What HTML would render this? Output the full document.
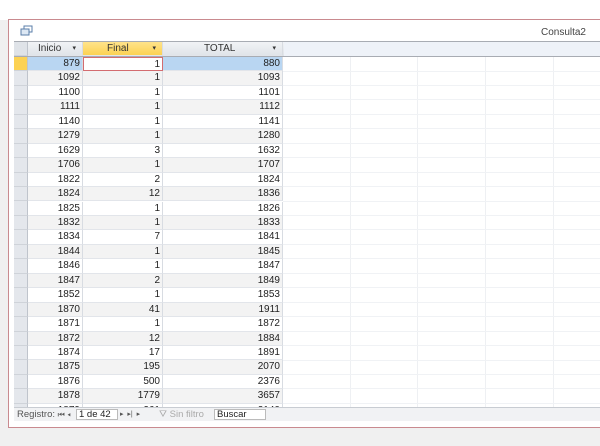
<!DOCTYPE html>
<html><head><meta charset="utf-8"><style>
*{margin:0;padding:0;box-sizing:border-box}
body{width:600px;height:446px;background:#f0f0f0;font-family:"Liberation Sans",sans-serif;font-size:10px;color:#222;position:relative;overflow:hidden}
.topb{position:absolute;left:0;top:0;width:600px;height:20px;background:#fff}
.frame{position:absolute;left:8px;top:19px;width:600px;height:409px;border:1px solid #c98a8f;background:#fff}
.title{position:absolute;right:14px;top:27px;font-size:10px;color:#444}
.grid{position:absolute;left:14px;top:41px;width:590px;height:366px;overflow:hidden;background:#fff;border-top:1px solid #a8acb3}
.selcol{position:absolute;left:0;top:15px;width:14px;bottom:0;background:#e4e7ec;border-right:1px solid #bfc4cc}
.row{position:absolute;left:0;width:600px;height:14.45px}
.c{position:absolute;top:0;height:100%;text-align:right;padding-right:2px;line-height:13.5px;border-right:1px solid #d8dce2;border-bottom:1px solid #e2e5ea}
.sel{left:0;width:14px;background:transparent;border-right:1px solid #bfc4cc;border-bottom:1px solid #cfd3d9}
.a{left:14px;width:55px}.b{left:69px;width:80px}.t{left:149px;width:120px}
.vl{position:absolute;top:0;bottom:0;width:1px;background:#eef0f3}
.hl{position:absolute;left:269px;right:0;height:1px;background:#f0f2f5}
.nav{position:absolute;left:14px;top:407px;width:590px;height:14px;background:#f1f2f4;border-top:1px solid #c8ccd2;font-size:9.5px;color:#555;line-height:13px}
</style></head><body>
<div class="topb"></div>
<div class="frame"></div>
<svg style="position:absolute;left:20px;top:25px" width="14" height="12"><rect x="4" y="1" width="8" height="6" fill="#fff" stroke="#5a7ea8"/><rect x="1" y="4" width="8" height="6" fill="#dde8f4" stroke="#5a7ea8"/></svg>
<div class="title">Consulta2</div>
<div class="grid" id="g">
<div class="selcol"></div>
<div class="row" style="top:0;height:15px;background:linear-gradient(#f1f3f6,#dfe3e8);border-bottom:1px solid #a8acb3;z-index:2">
<div class="c sel" style="background:#dfe3e8"></div>
<div class="c a" style="text-align:left;padding-left:10px;color:#333">Inicio<span style="position:absolute;right:6px;font-size:7px">▾</span></div>
<div class="c b" style="text-align:left;padding-left:24px;background:linear-gradient(#ffe38a,#fcd253);color:#333">Final<span style="position:absolute;right:6px;font-size:7px">▾</span></div>
<div class="c t" style="text-align:left;padding-left:41px;color:#333">TOTAL<span style="position:absolute;right:6px;font-size:7px">▾</span></div>
<div style="position:absolute;left:270px;right:0;top:0;height:14px;background:#eef2f8"></div>
</div>
</div>
<div class="nav"><span style="position:absolute;left:3px">Registro: <span style="font-size:8px">⏮ ◂</span></span>
<span style="position:absolute;left:62px;top:1px;width:42px;height:11px;background:#fff;border:1px solid #bbb;line-height:9px;padding-left:2px;color:#222">1 de 42</span>
<span style="position:absolute;left:106px;font-size:7px">▸ &nbsp;▸| &nbsp;▸</span>
<span style="position:absolute;left:145px;color:#aaa">⛛ Sin filtro</span>
<span style="position:absolute;left:200px;top:1px;width:52px;height:11px;background:#fff;border:1px solid #bbb;line-height:9px;padding-left:2px;color:#222">Buscar</span></div>
<script>
(function(){
var d=[[879,1,880],[1092,1,1093],[1100,1,1101],[1111,1,1112],[1140,1,1141],[1279,1,1280],[1629,3,1632],[1706,1,1707],[1822,2,1824],[1824,12,1836],[1825,1,1826],[1832,1,1833],[1834,7,1841],[1844,1,1845],[1846,1,1847],[1847,2,1849],[1852,1,1853],[1870,41,1911],[1871,1,1872],[1872,12,1884],[1874,17,1891],[1875,195,2070],[1876,500,2376],[1878,1779,3657],[1879,261,2140]];
var g=document.getElementById('g'),h='';
[336,403,471,539].forEach(function(x){h+='<div class="vl" style="left:'+x+'px"></div>'});
for(var i=0;i<d.length;i++){var y=15+i*14.45,bg=i%2?'#f3f3f3':'#fff';
h+='<div class="hl" style="top:'+(y+13.5)+'px"></div>';
if(i==0){h+='<div class="row" style="top:'+y+'px"><div class="c sel" style="background:#fcd253"></div><div class="c a" style="background:#b9d6f2">879</div><div class="c b" style="background:#fff;border:1px solid #d36c70">1</div><div class="c t" style="background:#b9d6f2">880</div></div>';continue;}
h+='<div class="row" style="top:'+y+'px"><div class="c sel"></div><div class="c a" style="background:'+bg+'">'+d[i][0]+'</div><div class="c b" style="background:'+bg+'">'+d[i][1]+'</div><div class="c t" style="background:'+bg+'">'+d[i][2]+'</div></div>';}
g.insertAdjacentHTML('beforeend',h);
})();
</script>
</body></html>
